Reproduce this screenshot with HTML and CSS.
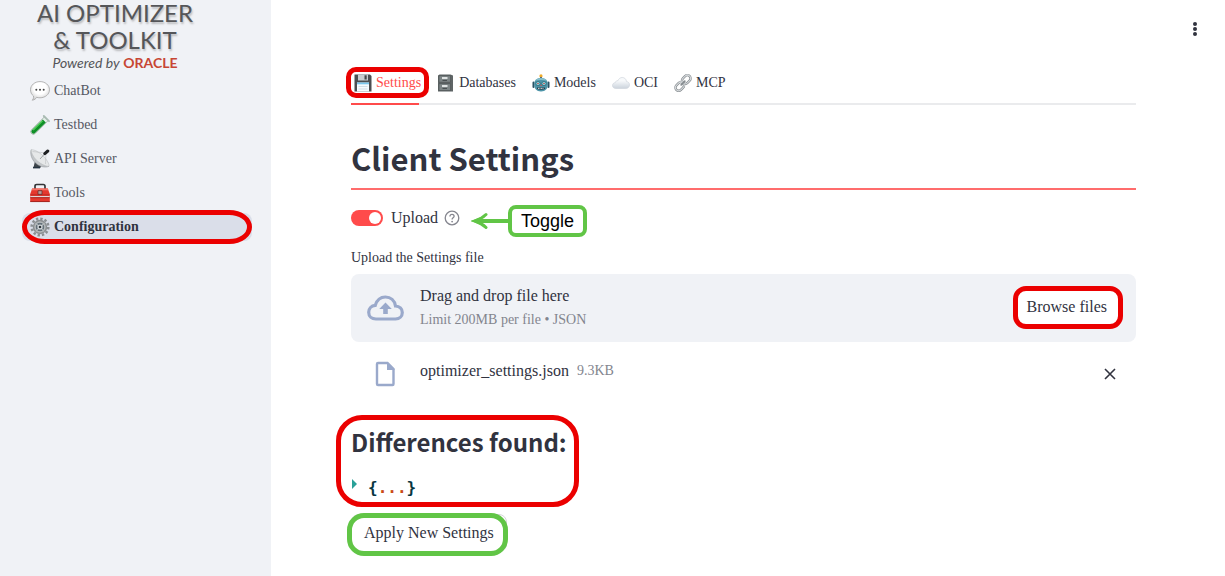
FILE: index.html
```html
<!DOCTYPE html>
<html lang="en">
<head>
<meta charset="utf-8">
<meta name="viewport" content="width=device-width, initial-scale=1">
<title>AI Optimizer &amp; Toolkit</title>
<link rel="stylesheet" href="styles.css">
</head>
<body>
<div class="app">
  <aside class="sidebar">
    <div class="logo">
      <div class="logo-name">AI OPTIMIZER</div>
      <div class="logo-kit">&amp; TOOLKIT</div>
      <div class="logo-by"><em>Powered by</em> <strong>ORACLE</strong></div>
    </div>
    <nav class="nav">
      <a class="nav-item" href="#chatbot">
        <svg class="nav-icon" viewBox="0 0 20 20" aria-hidden="true">
          <defs><radialGradient id="bubble" cx=".5" cy=".35" r=".65"><stop offset=".5" stop-color="#fff"/><stop offset="1" stop-color="#cfcfcf"/></radialGradient></defs>
          <path d="M10 .6c5.300 0 9.500 3.600 9.500 8.100s-4.200 8.100-9.500 8.100c-1.200 0-2.400-.2-3.400-.5-.7 1.500-2.200 2.700-4.400 2.900 1-1 1.500-2.300 1.300-4.200C1.600 13.500.5 11.300.5 8.700.5 4.200 4.700.6 10 .6z" fill="url(#bubble)" stroke="#a5a5a5" stroke-width=".8"/>
          <circle cx="6.300" cy="8.700" r="1" fill="#444"/><circle cx="10" cy="8.700" r="1" fill="#444"/><circle cx="13.700" cy="8.700" r="1" fill="#444"/>
        </svg>
        ChatBot</a>
      <a class="nav-item" href="#testbed">
        <svg class="nav-icon" viewBox="0 0 20 20" aria-hidden="true">
          <path d="M14.500 1.800l3.700 3.700L5.200 18.500a2.600 2.600 0 0 1-3.700-3.700z" fill="#e4efe8" stroke="#8d9d94" stroke-width=".7"/>
          <path d="M12.800 4.400l3 3L5 18a2.100 2.100 0 0 1-3-3z" fill="#0f8f27"/>
          <path d="M12.500 5.900L3.200 15.200" stroke="#56d45c" stroke-width="1.200"/>
          <path d="M13.800 1l5.200 5.200" stroke="#a9bbb2" stroke-width="1.800" stroke-linecap="round"/>
        </svg>
        Testbed</a>
      <a class="nav-item" href="#api">
        <svg class="nav-icon" viewBox="0 0 20 20" aria-hidden="true">
          <path d="M5 12l5 1 1 5.500H3.500z" fill="#3f464c"/><path d="M3 18.600h7" stroke="#263442" stroke-width="1.600"/>
          <path d="M1.200.8C-.2 5 1.800 10.500 5.500 14c3.800 3.600 9.500 5 13.500 3.300z" fill="#c4c7ca" stroke="#858a8e" stroke-width=".5"/>
          <path d="M1.200.8c3-.5 8.500 2.600 12 6.200 3.700 3.700 6.300 8 5.800 10.300C15 17.500 9.500 14 6.300 11 3 7.500 1 3.500 1.200.8z" fill="#e6e8e9" stroke="#b2b6b9" stroke-width=".5"/>
          <path d="M2.500 2.500L16 4l-.5 11" fill="none" stroke="#b4b7b9" stroke-width=".5"/>
          <path d="M10 10l5-5.500" stroke="#8c9093" stroke-width=".8"/><path d="M14.800 4.600l3-2.600" stroke="#1d1f21" stroke-width="3" stroke-linecap="round"/>
        </svg>
        API Server</a>
      <a class="nav-item" href="#tools">
        <svg class="nav-icon" viewBox="0 0 20 20" aria-hidden="true">
          <path d="M5 6V3.200Q5 1.500 6.700 1.500h6.600Q15 1.500 15 3.200V6" fill="none" stroke="#343638" stroke-width="1.700"/>
          <path d="M2.200 5.500h15.600l2 5.500v8H.2v-8z" fill="#e5382d"/><path d="M2.200 5.500h15.600l.6 1.700H1.600z" fill="#f37367"/>
          <path d="M.3 11.800h19.400" stroke="#b02a22" stroke-width=".8"/><path d="M.3 13.600h19.400" stroke="#e3d5d4" stroke-width="1.200"/><path d="M.3 14.700h19.400M.3 18.600h19.400" stroke="#86201b" stroke-width=".7"/>
          <path d="M8 7.700h4v3.600H8z" fill="#b99b98" stroke="#5b2522" stroke-width=".7"/>
        </svg>
        Tools</a>
      <a class="nav-item nav-active" href="#configuration" aria-current="page">
        <svg class="nav-icon" viewBox="0 0 20 20" aria-hidden="true">
          <circle cx="10" cy="10" r="8.300" fill="none" stroke="#8b8f92" stroke-width="2.600" stroke-dasharray="2.350 2"/>
          <circle cx="10" cy="10" r="6.500" fill="#a9acae" stroke="#8b8f92" stroke-width="1.400"/>
          <circle cx="10" cy="10" r="4.800" fill="#66727b" stroke="#c6cacc" stroke-width=".8"/>
          <path d="M5.600 6l2.500 2.600M14.500 6L12 8.500M6 14.500l2-2.500M14 14.500L12 12" stroke="#b3b8bb" stroke-width="1.200"/>
          <circle cx="10" cy="10" r="2.600" fill="#d5dadd"/><circle cx="10" cy="10" r="1.300" fill="#30373d"/>
        </svg>
        Configuration</a>
    </nav>
  </aside>

  <main class="main">
    <button class="menu" type="button" aria-label="Main menu">
      <svg viewBox="0 0 6 16" aria-hidden="true"><circle cx="3" cy="3" r="2"/><circle cx="3" cy="8" r="2"/><circle cx="3" cy="13" r="2"/></svg>
    </button>

    <div class="tabs" role="tablist">
      <button class="tab tab-active" type="button" role="tab" aria-selected="true">
        <svg class="tab-icon" viewBox="0 0 18 18" aria-hidden="true">
          <path d="M.5.500h15.500L17.500 2v15.500H.5z" fill="#4b4e51"/><path d="M4 .5h10v6H4z" fill="#c9cdd0"/><path d="M10.500 1.300h2.200v4.200h-2.200z" fill="#44484b"/>
          <path d="M3 8.500h12v9H3z" fill="#f5fbff"/><path d="M3 8.500h12v1.800H3z" fill="#79c6ec"/><path d="M4.500 12.500h9M4.500 15h9" stroke="#c4d3db" stroke-width=".7"/>
        </svg>
        Settings</button>
      <button class="tab" type="button" role="tab" aria-selected="false">
        <svg class="tab-icon" viewBox="0 0 18 18" aria-hidden="true">
          <path d="M2.500.500h11l2.500 1v16H1V1.500z" fill="#5f6566"/><path d="M2 1.700h11.500v6.500H2zM2 9.700h11.500v6.800H2z" fill="#7d8586" stroke="#4b5052" stroke-width=".6"/>
          <path d="M5 3h5.500v2H5zM5 11h5.500v2H5z" fill="#dfe3e3"/><path d="M5.500 6.500H10M5.500 14.500H10" stroke="#4a5052" stroke-width="1"/>
        </svg>
        Databases</button>
      <button class="tab" type="button" role="tab" aria-selected="false">
        <svg class="tab-icon" viewBox="0 0 18 18" aria-hidden="true">
          <circle cx="9" cy="1.900" r="1.600" fill="#efaa29"/><path d="M9 3v2" stroke="#566e80" stroke-width="2"/>
          <path d="M1.500 8.500v4.500M16.500 8.500v4.500" stroke="#2b5364" stroke-width="2" stroke-linecap="round"/>
          <path d="M9 4c4.500 0 6.800 2.400 6.800 6.300 0 4.200-2.200 7.200-6.800 7.200s-6.800-3-6.800-7.200C2.200 6.400 4.500 4 9 4z" fill="#4d94a8"/><path d="M9 4c3 0 5 .9 6 2.800-3.800-1.200-8.200-1.200-12 0C4 4.900 6 4 9 4z" fill="#86bfcb"/>
          <circle cx="6" cy="9.600" r="2.100" fill="#8de2ea" stroke="#24596a" stroke-width=".7"/><circle cx="12" cy="9.600" r="2.100" fill="#8de2ea" stroke="#24596a" stroke-width=".7"/>
          <circle cx="6" cy="9.600" r=".8" fill="#cc3d3d"/><circle cx="12" cy="9.600" r=".8" fill="#cc3d3d"/><path d="M9 10.300l-.8 1.800h1.600z" fill="#d9463c"/>
          <path d="M5 13.500h8V15q-4 1.600-8 0z" fill="#263d48"/><path d="M6 14.400h6" stroke="#fff" stroke-width=".8" stroke-dasharray="1 .5"/>
        </svg>
        Models</button>
      <button class="tab" type="button" role="tab" aria-selected="false">
        <svg class="tab-icon" viewBox="0 0 18 18" aria-hidden="true">
          <defs><linearGradient id="cloud" x1="0" y1="0" x2="0" y2="1"><stop offset=".3" stop-color="#f7f9fb"/><stop offset="1" stop-color="#cbd3dc"/></linearGradient></defs>
          <path d="M4 14.500C1.800 14.500.5 13.200.5 11.500s1.300-2.800 2.900-2.900C3.600 7.200 4.700 6.400 6 6.700 6.700 4.600 8.300 3.500 10.200 3.500c2.500 0 4.100 1.700 4.300 4.100 1.800.1 3 1.400 3 3.200 0 2.200-1.500 3.700-3.800 3.700z" fill="url(#cloud)" stroke="#d0d6dd" stroke-width=".7"/>
        </svg>
        OCI</button>
      <button class="tab" type="button" role="tab" aria-selected="false">
        <svg class="tab-icon" viewBox="0 0 18 18" aria-hidden="true">
          <g fill="none" stroke-linecap="round"><g stroke="#80868a" stroke-width="2.400"><rect x="7.500" y="2.300" width="9.500" height="6.400" rx="3.200" transform="rotate(-45 12.250 5.500)"/><rect x="1" y="9.300" width="9.500" height="6.400" rx="3.200" transform="rotate(-45 5.750 12.500)"/></g>
          <g stroke="#d5d9dc" stroke-width="1.200"><rect x="7.500" y="2.300" width="9.500" height="6.400" rx="3.200" transform="rotate(-45 12.250 5.500)"/><rect x="1" y="9.300" width="9.500" height="6.400" rx="3.200" transform="rotate(-45 5.750 12.500)"/></g>
          <path d="M7.200 10.800l3.600-3.600" stroke="#868c90" stroke-width="1.800"/></g>
        </svg>
        MCP</button>
    </div>

    <h1 class="title">Client Settings</h1>

    <div class="toggle-row">
      <label class="toggle"><input class="switch" type="checkbox" role="switch" checked>Upload</label>
      <svg class="help" viewBox="0 0 16 16" aria-hidden="true"><g fill="none" stroke="#85868f" stroke-width="1.300"><circle cx="8" cy="8" r="6.800"/><path d="M5.900 6.500c0-1.300.9-2.100 2.100-2.100s2.100.8 2.100 1.900c0 1.500-2 1.600-2 3.200"/></g><circle cx="8.100" cy="11.600" r=".9" fill="#85868f"/></svg>
      <div class="callout">
        <svg class="arrow" viewBox="0 0 38 18" aria-hidden="true"><path d="M38 9H7" stroke="#61c546" stroke-width="4"/><path d="M15 2.500Q11 6.500 4 9q7 2.500 11 6.500" fill="none" stroke="#61c546" stroke-width="3" stroke-linecap="round"/><path d="M0 9l10-4v8z" fill="#61c546"/></svg>
        <span class="callout-text">Toggle</span>
      </div>
    </div>

    <div class="upload-label" id="upload-label">Upload the Settings file</div>
    <section class="dropzone" aria-labelledby="upload-label">
      <svg class="cloud" viewBox="0 0 37 26" aria-hidden="true"><path d="M9 24C4.500 24 1.700 21 1.700 17.200c0-3.700 2.700-6.400 6.500-6.800C9.800 5.300 13.500 2 18.400 2c5.300 0 9.200 3.600 10.100 9 4 .3 6.800 2.900 6.800 6.500 0 3.800-2.800 6.500-6.800 6.500z" fill="none" stroke="#9aa9cb" stroke-width="3.200"/><path d="M18.500 7.500l6.300 6.500h-4v5h-4.600v-5h-4z" fill="#9aa9cb"/></svg>
      <div class="drop-text">
        <div class="drop-main">Drag and drop file here</div>
        <div class="drop-limit">Limit 200MB per file • JSON</div>
      </div>
      <button class="button browse" type="button">Browse files</button>
    </section>

    <div class="file">
      <svg class="file-icon" viewBox="0 0 20 26" aria-hidden="true"><path d="M3 2h9.500L18.500 8v15q0 1-1 1h-14.500q-1 0-1-1V3q0-1 1-1z" fill="none" stroke="#9aa9cb" stroke-width="2.400"/><path d="M12 1l8 8h-8z" fill="#9aa9cb"/></svg>
      <span class="file-name">optimizer_settings.json</span>
      <span class="file-size">9.3KB</span>
      <button class="remove" type="button" aria-label="Remove file"><svg viewBox="0 0 12 12" aria-hidden="true"><path d="M1 1l10 10M11 1L1 11" stroke="#31333f" stroke-width="1.600"/></svg></button>
    </div>

    <section class="diff">
      <h2 class="subtitle">Differences found:</h2>
      <div class="json"><svg class="caret" viewBox="0 0 6 10" aria-hidden="true"><path d="M1 0l5 5-5 5z" fill="#2aa198"/></svg><span>{<span class="dots">...</span>}</span></div>
    </section>

    <button class="button apply" type="button">Apply New Settings</button>
  </main>
</div>
</body>
</html>
```

FILE: styles.css
```css
* { box-sizing: border-box; }

body {
  margin: 0;
  background: #fff;
  color: #31333f;
  font-family: "Liberation Serif", serif;
  font-size: 16px;
  line-height: 24px;
}

button {
  font: inherit;
  color: inherit;
  cursor: pointer;
}

svg { display: block; flex: none; }

.app { display: flex; min-height: 100vh; }

/* Sidebar */
.sidebar {
  flex: none;
  width: 271px;
  padding: 0 20px 0 22px;
  background: #f0f2f6;
}

.logo {
  width: 186px;
  text-align: center;
  font-family: Lato, sans-serif;
  color: #555659;
}

.logo-name, .logo-kit {
  font-size: 24px;
  line-height: 27px;
  text-shadow: 1px 2px 2px #b9babd;
}

.logo-name { line-height: 26px; }
.logo-by { font-size: 14px; line-height: 20px; }
.logo-by strong { color: #c74634; font-weight: 700; }

.nav { display: flex; flex-direction: column; gap: 6px; margin-top: 4px; }

.nav-item {
  position: relative;
  display: flex;
  align-items: center;
  gap: 4px;
  height: 28px;
  padding-left: 8px;
  border-radius: 8px;
  color: #565863;
  font-size: 14px;
  text-decoration: none;
}

.nav-icon { width: 20px; height: 20px; }

.nav-active {
  margin-right: -1px;
  background: #dadee9;
  color: #31333f;
  font-weight: 700;
}

/* Highlight rings */
.nav-active::after, .tab-active::before, .browse::after, .diff::after, .apply::after {
  content: "";
  position: absolute;
  border: 5px solid #eb0000;
  pointer-events: none;
}

.nav-active::after { inset: -3px 0 -3px 0; border-radius: 24px / 18px; }
.tab-active::before { inset: 5px -8px 5px -8px; border-radius: 10px; }
.browse::after { inset: -3px -4px -4px -2px; border-radius: 13px; }
.diff::after { inset: -12px -12px -10px -15px; border-radius: 26px; }
.apply::after { inset: -2px -2px -5px -5px; border-color: #61c546; border-radius: 17px; }

/* Main column */
.main {
  position: relative;
  flex: 1;
  min-width: 0;
  padding: 62px 89px 20px 80px;
}

.menu {
  position: absolute;
  top: 21px;
  right: 27px;
  padding: 0;
  border: 0;
  background: none;
}

.menu svg { width: 6px; height: 16px; fill: #31333f; }

.tabs {
  display: flex;
  gap: 16px;
  padding-left: 3px;
  border-bottom: 2px solid #eaebed;
}

.tab {
  position: relative;
  display: flex;
  align-items: center;
  gap: 4px;
  height: 41px;
  padding: 0;
  border: 0;
  background: none;
  font-size: 14px;
}

.tab-icon { width: 18px; height: 18px; }
.tab-active { color: #ff4b4b; }

.tab-active::after {
  content: "";
  position: absolute;
  inset: auto 2px -2px -3px;
  height: 2px;
  background: #ff4b4b;
}

.title, .subtitle {
  font-family: "Noto Sans CJK SC", "Noto Sans CJK JP", sans-serif;
  font-weight: 600;
}

.title {
  margin: 30px 0 0;
  padding-bottom: 7px;
  border-bottom: 2px solid #ff6c6c;
  font-size: 31px;
  line-height: 46px;
}

.toggle-row {
  position: relative;
  display: flex;
  align-items: center;
  gap: 6px;
  height: 32px;
  margin-top: 12px;
}

.toggle { display: flex; align-items: center; gap: 8px; }

.switch {
  appearance: none;
  width: 32px;
  height: 16px;
  margin: 0;
  padding: 2px;
  border-radius: 8px;
  background: #ff4b4b;
}

.switch::before {
  content: "";
  display: block;
  width: 12px;
  height: 12px;
  margin-left: auto;
  border-radius: 50%;
  background: #fff;
}

.switch:not(:checked) { background: #a3a8b8; }
.switch:not(:checked)::before { margin-left: 0; }
.help { width: 16px; height: 16px; }

.callout {
  position: absolute;
  top: 3px;
  left: 120px;
  display: flex;
  align-items: center;
}

.arrow { width: 38px; height: 18px; margin-right: -1px; }

.callout-text {
  padding: 0 9px;
  border: 4px solid #61c546;
  border-radius: 8px;
  color: #000;
  font-family: "Liberation Sans", sans-serif;
  font-size: 18px;
}

.upload-label { margin-top: 13px; font-size: 14px; line-height: 21px; }

.dropzone {
  display: flex;
  align-items: center;
  margin-top: 6px;
  padding: 10px 16px;
  border-radius: 8px;
  background: #f0f2f6;
}

.cloud { width: 37px; height: 26px; margin-right: 16px; }
.drop-text { flex: 1; }
.drop-limit, .file-size { color: #83858e; font-size: 14px; }

.button {
  position: relative;
  padding: 6px 12px;
  border: 1px solid #d6d6d9;
  border-radius: 8px;
  background: #fff;
}

.browse { margin-bottom: 2px; }

.file {
  display: flex;
  align-items: center;
  margin-top: 17px;
  padding: 0 20px 0 24px;
}

.file-icon { width: 20px; height: 26px; margin-right: 25px; }
.file-name, .file-size { padding-bottom: 6px; }
.file-size { margin-left: 8px; }
.remove { margin-left: auto; padding: 0; border: 0; background: none; }
.remove svg { width: 12px; height: 12px; }

.diff { position: relative; width: fit-content; margin-top: 38px; }
.subtitle { margin: 0; font-size: 24px; line-height: 30px; }

.json {
  display: flex;
  gap: 11px;
  margin-top: 22px;
  color: #073642;
  font-family: "DejaVu Sans Mono", monospace;
  font-size: 16px;
  font-weight: 700;
  line-height: 18px;
}

.caret { width: 6px; height: 10px; }
.dots { color: #cb4b16; }

.apply { display: block; margin-top: 17px; }
```
